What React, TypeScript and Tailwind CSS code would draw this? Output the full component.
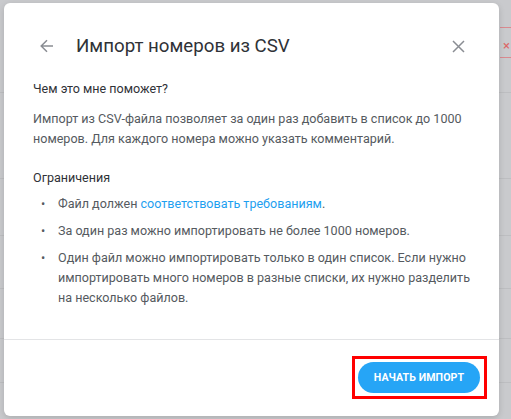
import React from "react";

export default function App() {
  return (
    <div className="relative w-[511px] h-[419px] overflow-hidden bg-[#c9cacd]" style={{ fontFamily: "Roboto, 'Liberation Sans', sans-serif" }}>
      {/* faint background rows */}
      <div className="absolute inset-0 pointer-events-none">
        <div className="absolute left-0 right-0 top-[92px] h-px bg-[#bdbec1]" />
        <div className="absolute left-0 right-0 top-[178px] h-px bg-[#bdbec1]" />
        <div className="absolute left-0 right-0 top-[235px] h-px bg-[#bdbec1]" />
        <div className="absolute left-0 right-0 top-[288px] h-px bg-[#bdbec1]" />
        <div className="absolute left-0 right-0 top-[338px] h-px bg-[#bdbec1]" />
        <div className="absolute left-0 right-0 top-[382px] h-px bg-[#bdbec1]" />
        <div className="absolute left-[500px] right-0 top-[27px] h-px bg-[#d98a8f]" />
        <div className="absolute left-[500px] right-0 top-[57px] h-px bg-[#d98a8f]" />
        <div className="absolute left-[503px] top-[36px] text-[#d66] text-[13px]">×</div>
      </div>

      <div className="absolute left-[4px] top-[3px] w-[495px] h-[413px] bg-white rounded-[6px] shadow-[0_2px_6px_rgba(0,0,0,0.15)] flex flex-col">
        {/* header */}
        <div className="flex items-center h-[76px] px-[36px] pt-[10px] shrink-0">
          <svg width="14" height="14" viewBox="0 0 14 14" className="mr-[22px]">
            <path d="M13 7H1.5M7 1.2 1.2 7 7 12.8" fill="none" stroke="#8a8d93" strokeWidth="1.5" />
          </svg>
          <div className="text-[18.7px] text-[#2f3237] flex-1 leading-none">Импорт номеров из CSV</div>
          <svg width="13" height="13" viewBox="0 0 13 13" className="mr-[-2px]">
            <path d="M1 1l11 11M12 1 1 12" fill="none" stroke="#8a8d93" strokeWidth="1.5" />
          </svg>
        </div>

        {/* body */}
        <div className="pl-[29px] pr-[20px] flex-1 text-[12.55px] text-[#555a60] leading-[20px]">
          <div className="text-[#2f3237] mb-[10px]">Чем это мне поможет?</div>
          <p className="pr-[6px]">
            Импорт из CSV-файла позволяет за один раз добавить в список до 1000 номеров. Для каждого номера можно указать комментарий.
          </p>
          <div className="text-[#2f3237] mt-[19px] mb-[6px]">Ограничения</div>
          <ul className="flex flex-col gap-[7px]">
            <li className="flex">
              <span className="w-[25px] pl-[8px] shrink-0">•</span>
              <span>
                Файл должен <span className="text-[#1ea0f0]">соответствовать требованиям</span>.
              </span>
            </li>
            <li className="flex">
              <span className="w-[25px] pl-[8px] shrink-0">•</span>
              <span>За один раз можно импортировать не более 1000 номеров.</span>
            </li>
            <li className="flex">
              <span className="w-[25px] pl-[8px] shrink-0">•</span>
              <span>
                Один файл можно импортировать только в один список. Если нужно импортировать много номеров в разные списки, их нужно разделить на несколько файлов.
              </span>
            </li>
          </ul>
        </div>

        {/* footer */}
        <div className="border-t border-[#e3e4e6] h-[77px] flex items-start justify-end pr-[19px] pt-[22px] shrink-0">
          <div className="relative">
            <div className="absolute -left-[6px] -top-[6px] -right-[7px] -bottom-[6px] border-[3px] border-[#ff0000]" />
            <button className="w-[122px] h-[31px] rounded-full bg-[#26a5f6] text-white text-[10.6px] font-bold tracking-[0.1px]">
              НАЧАТЬ ИМПОРТ
            </button>
          </div>
        </div>
      </div>
    </div>
  );
}
